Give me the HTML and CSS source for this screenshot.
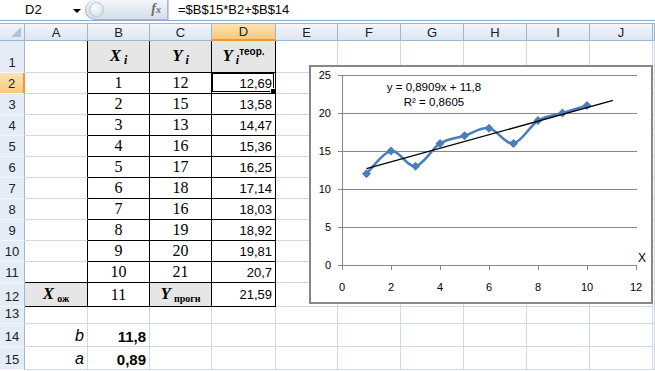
FILE: index.html
```html
<!DOCTYPE html>
<html lang="ru">
<head>
  <meta charset="UTF-8">
  <title>Регрессия</title>
  <link rel="stylesheet" href="styles.css">
</head>
<body>
  <!-- Formula bar -->
  <div class="formula-bar">
    <div class="name-box">D2<span class="drop"></span></div>
    <div class="fx-pill"><span class="knob"></span><span class="fx">f<sub>x</sub></span></div>
    <div class="formula">=$B$15*B2+$B$14</div>
  </div>

  <div class="sheet">
    <table class="grid">
      <colgroup>
        <col class="c-rh">
        <col class="c63"><col class="c62"><col class="c62"><col class="c64"><col class="c62">
        <col class="c63"><col class="c63"><col class="c63"><col class="c63"><col class="c63">
        <col class="c2">
      </colgroup>
      <tr class="head">
        <th class="corner"><span class="tri"></span></th>
        <th>A</th><th>B</th><th>C</th><th class="sel">D</th><th>E</th>
        <th>F</th><th>G</th><th>H</th><th>I</th><th>J</th><th></th>
      </tr>
      <tr class="h32">
        <th class="rh">1</th>
        <td class="rb"></td>
        <td class="box fill title"><span class="var">X</span><sub>i</sub></td>
        <td class="box fill title"><span class="var">Y</span><sub>i</sub></td>
        <td class="box fill title"><span class="var">Y</span><sub>i</sub><sup>теор.</sup></td>
        <td></td><td></td><td></td><td></td><td></td><td></td><td></td>
      </tr>
      <tr class="h21">
        <th class="rh sel">2</th>
        <td class="rb"></td>
        <td class="box num">1</td><td class="box num">12</td>
        <td class="box val active">12,69<span class="handle"></span></td>
        <td></td><td></td><td></td><td></td><td></td><td></td><td></td>
      </tr>
      <tr class="h21">
        <th class="rh">3</th><td class="rb"></td>
        <td class="box num">2</td><td class="box num">15</td><td class="box val">13,58</td>
        <td></td><td></td><td></td><td></td><td></td><td></td><td></td>
      </tr>
      <tr class="h21">
        <th class="rh">4</th><td class="rb"></td>
        <td class="box num">3</td><td class="box num">13</td><td class="box val">14,47</td>
        <td></td><td></td><td></td><td></td><td></td><td></td><td></td>
      </tr>
      <tr class="h21">
        <th class="rh">5</th><td class="rb"></td>
        <td class="box num">4</td><td class="box num">16</td><td class="box val">15,36</td>
        <td></td><td></td><td></td><td></td><td></td><td></td><td></td>
      </tr>
      <tr class="h21">
        <th class="rh">6</th><td class="rb"></td>
        <td class="box num">5</td><td class="box num">17</td><td class="box val">16,25</td>
        <td></td><td></td><td></td><td></td><td></td><td></td><td></td>
      </tr>
      <tr class="h21">
        <th class="rh">7</th><td class="rb"></td>
        <td class="box num">6</td><td class="box num">18</td><td class="box val">17,14</td>
        <td></td><td></td><td></td><td></td><td></td><td></td><td></td>
      </tr>
      <tr class="h21">
        <th class="rh">8</th><td class="rb"></td>
        <td class="box num">7</td><td class="box num">16</td><td class="box val">18,03</td>
        <td></td><td></td><td></td><td></td><td></td><td></td><td></td>
      </tr>
      <tr class="h21">
        <th class="rh">9</th><td class="rb"></td>
        <td class="box num">8</td><td class="box num">19</td><td class="box val">18,92</td>
        <td></td><td></td><td></td><td></td><td></td><td></td><td></td>
      </tr>
      <tr class="h21">
        <th class="rh">10</th><td class="rb"></td>
        <td class="box num">9</td><td class="box num">20</td><td class="box val">19,81</td>
        <td></td><td></td><td></td><td></td><td></td><td></td><td></td>
      </tr>
      <tr class="h21">
        <th class="rh">11</th><td class="rb bb"></td>
        <td class="box num">10</td><td class="box num">21</td><td class="box val">20,7</td>
        <td></td><td></td><td></td><td></td><td></td><td></td><td></td>
      </tr>
      <tr class="h24">
        <th class="rh">12</th>
        <td class="rb bb fill title"><span class="var">X</span><sub class="word">ож</sub></td>
        <td class="box num">11</td>
        <td class="box fill title"><span class="var">Y</span><sub class="word">прогн</sub></td>
        <td class="box val">21,59</td>
        <td></td><td></td><td></td><td></td><td></td><td></td><td></td>
      </tr>
      <tr class="h15">
        <th class="rh">13</th>
        <td></td><td></td><td></td><td></td><td></td><td></td><td></td><td></td><td></td><td></td><td></td>
      </tr>
      <tr class="h23">
        <th class="rh">14</th>
        <td class="letter">b</td><td class="coef">11,8</td>
        <td></td><td></td><td></td><td></td><td></td><td></td><td></td><td></td><td></td>
      </tr>
      <tr class="h23">
        <th class="rh">15</th>
        <td class="letter">a</td><td class="coef">0,89</td>
        <td></td><td></td><td></td><td></td><td></td><td></td><td></td><td></td><td></td>
      </tr>
    </table>

    <!-- Floating chart object -->
    <svg class="chart" width="345" height="240" viewBox="309 65 345 240">
      <rect x="310" y="66" width="342" height="237" fill="#fff" stroke="#878787" stroke-width="2"/>
      <g stroke="#868686" stroke-width="1">
        <line x1="338" y1="75.5" x2="637" y2="75.5"/>
        <line x1="338" y1="113.5" x2="637" y2="113.5"/>
        <line x1="338" y1="151.5" x2="637" y2="151.5"/>
        <line x1="338" y1="189.5" x2="637" y2="189.5"/>
        <line x1="338" y1="227.5" x2="637" y2="227.5"/>
        <line x1="338" y1="265.5" x2="637" y2="265.5"/>
        <line x1="342.5" y1="75" x2="342.5" y2="266"/>
        <line x1="342.5" y1="265" x2="342.5" y2="270"/>
        <line x1="391.5" y1="265" x2="391.5" y2="270"/>
        <line x1="440.5" y1="265" x2="440.5" y2="270"/>
        <line x1="489.5" y1="265" x2="489.5" y2="270"/>
        <line x1="538.5" y1="265" x2="538.5" y2="270"/>
        <line x1="587.5" y1="265" x2="587.5" y2="270"/>
        <line x1="636.5" y1="265" x2="636.5" y2="270"/>
      </g>
      <g class="tick" text-anchor="end">
        <text x="331" y="79">25</text>
        <text x="331" y="117">20</text>
        <text x="331" y="155">15</text>
        <text x="331" y="193">10</text>
        <text x="331" y="231">5</text>
        <text x="331" y="269">0</text>
      </g>
      <g class="tick" text-anchor="middle">
        <text x="342" y="291">0</text>
        <text x="391" y="291">2</text>
        <text x="440" y="291">4</text>
        <text x="489" y="291">6</text>
        <text x="538" y="291">8</text>
        <text x="587" y="291">10</text>
        <text x="636" y="291">12</text>
      </g>
      <text class="axis-name" x="642" y="262" text-anchor="middle">X</text>

      <path d="M366.5,173.8 C370.6,170 382.8,152.3 391,151 C399.2,149.7 407.3,167.5 415.5,166.2 C423.7,164.9 431.8,148.5 440,143.4 C448.2,138.3 456.3,138.3 464.5,135.8 C472.7,133.3 480.8,126.9 489,128.2 C497.2,129.5 505.3,144.7 513.5,143.4 C521.7,142.1 529.8,125.7 538,120.6 C546.2,115.5 554.3,115.5 562.5,113 C570.7,110.5 582.9,106.7 587,105.4"
            fill="none" stroke="#4A7EBB" stroke-width="2.5"/>
      <g fill="#4A7EBB">
        <path d="M366.5,169.3 L371,173.8 L366.5,178.3 L362,173.8 Z"/>
        <path d="M391,146.5 L395.5,151 L391,155.5 L386.5,151 Z"/>
        <path d="M415.5,161.7 L420,166.2 L415.5,170.7 L411,166.2 Z"/>
        <path d="M440,138.9 L444.5,143.4 L440,147.9 L435.5,143.4 Z"/>
        <path d="M464.5,131.3 L469,135.8 L464.5,140.3 L460,135.8 Z"/>
        <path d="M489,123.7 L493.5,128.2 L489,132.7 L484.5,128.2 Z"/>
        <path d="M513.5,138.9 L518,143.4 L513.5,147.9 L509,143.4 Z"/>
        <path d="M538,116.1 L542.5,120.6 L538,125.1 L533.5,120.6 Z"/>
        <path d="M562.5,108.5 L567,113 L562.5,117.5 L558,113 Z"/>
        <path d="M587,100.9 L591.5,105.4 L587,109.9 L582.5,105.4 Z"/>
      </g>
      <line x1="366.5" y1="168.6" x2="613" y2="100.4" stroke="#000" stroke-width="1.3"/>

      <text class="eq" x="434" y="91" text-anchor="middle">y = 0,8909x + 11,8</text>
      <text class="eq" x="434" y="106" text-anchor="middle">R² = 0,8605</text>
    </svg>
  </div>
</body>
</html>
```

FILE: styles.css
```css
/* Page */
body {
  margin: 0;
  width: 655px;
  height: 371px;
  overflow: hidden;
  background: #fff;
  font-family: "Liberation Sans", Arial, sans-serif;
  color: #000;
}

/* Formula bar */
.formula-bar {
  display: flex;
  align-items: center;
  height: 20px;
  border-bottom: 1px solid #8ea9cc;
  margin-bottom: 2px;
  font-size: 13px;
}

.name-box {
  position: relative;
  width: 85px;
  padding-left: 25px;
  box-sizing: border-box;
  line-height: 20px;
}

.drop {
  position: absolute;
  left: 73px;
  top: 9px;
  border-left: 4px solid transparent;
  border-right: 4px solid transparent;
  border-top: 4px solid #000;
}

.fx-pill {
  position: relative;
  width: 83px;
  height: 20px;
  box-sizing: border-box;
  border: 1px solid #a7b7cc;
  border-top: none;
  border-radius: 0 0 0 10px;
  border-top-left-radius: 10px;
  background: linear-gradient(#f3f6fa, #d4deea);
}

.knob {
  position: absolute;
  left: 3px;
  top: 2px;
  width: 13px;
  height: 13px;
  border-radius: 50%;
  background: radial-gradient(circle at 40% 35%, #fff, #cfd8e4);
  border: 1px solid #b9c6d6;
}

.fx {
  position: absolute;
  right: 6px;
  top: 1px;
  font-family: "Liberation Serif", serif;
  font-style: italic;
  font-weight: bold;
  font-size: 14px;
  color: #6d6d6d;
}

.fx sub {
  font-size: 10px;
  vertical-align: 0;
}

.formula {
  flex: 1;
  height: 20px;
  line-height: 20px;
  padding-left: 9px;
  border-left: 1px solid #c5cfdc;
}

/* Grid */
.sheet {
  position: relative;
}

.grid {
  border-collapse: separate;
  border-spacing: 0;
  table-layout: fixed;
  width: 655px;
  font-size: 13px;
}

.c-rh { width: 25px; }
.c2 { width: 2px; }
.c62 { width: 62px; }
.c63 { width: 63px; }
.c64 { width: 64px; }

.grid td,
.grid th {
  box-sizing: border-box;
  padding: 0 3px;
  border-right: 1px solid #d0d7e5;
  border-bottom: 1px solid #d0d7e5;
  line-height: 1;
  white-space: nowrap;
  overflow: hidden;
}

.h15 { height: 15px; }
.h21 { height: 21px; }
.h23 { height: 23px; }
.h24 { height: 24px; }
.h32 { height: 32px; }

/* Column and row headers */
.head { height: 18px; }

.head th {
  font-weight: normal;
  color: #222;
  background: linear-gradient(#f2f6fb, #dce6f2);
  border-top: 1px solid #9eb6ce;
  border-right: 1px solid #9eb6ce;
  border-bottom: 1px solid #9eb6ce;
}

.head th.sel {
  background: linear-gradient(#fbe4b4, #f6c97c);
  border-bottom: 2px solid #f29536;
}

.corner {
  position: relative;
}

.tri {
  position: absolute;
  right: 3px;
  bottom: 3px;
  border-left: 10px solid transparent;
  border-bottom: 10px solid #b3c3d8;
}

.grid th.rh {
  font-weight: normal;
  color: #222;
  background: #e4ecf7;
  border-right: 1px solid #9eb6ce;
  border-bottom: 1px solid #f4f7fb;
  vertical-align: bottom;
  padding: 0 0 3px;
  text-align: center;
}

.grid th.rh.sel {
  background: linear-gradient(#fbe4b4, #f6c97c);
  border-right: 2px solid #f29536;
}

/* Table with black borders */
.grid td.rb { border-right-color: #000; }
.grid td.bb { border-bottom-color: #000; }

.grid td.box {
  border-right: 1px solid #000;
  border-bottom: 1px solid #000;
}

.fill { background: #e6e6e6; }

.title {
  text-align: center;
  font-family: "Liberation Serif", serif;
  font-weight: bold;
  vertical-align: middle;
}

.var {
  font-style: italic;
  font-size: 17px;
}

.title sub {
  font-style: italic;
  font-size: 12px;
  vertical-align: -3px;
  margin-left: 3px;
}

.title sub.word {
  font-style: normal;
  font-size: 10px;
  margin-left: 3px;
}

.title sup {
  font-family: "Liberation Sans", Arial, sans-serif;
  font-size: 10px;
  vertical-align: 6px;
}

.num {
  text-align: center;
  font-family: "Liberation Serif", serif;
  font-size: 16px;
}

.val {
  text-align: right;
  font-size: 13px;
}

.active {
  position: relative;
}

.active::before {
  content: "";
  position: absolute;
  left: -2px;
  top: -2px;
  right: -1px;
  bottom: -1px;
  border: 3px double #000;
}

.handle {
  position: absolute;
  right: -2px;
  bottom: -2px;
  width: 5px;
  height: 5px;
  background: #000;
  border: 1px solid #fff;
}

.letter {
  text-align: right;
  font-style: italic;
  font-size: 16px;
  vertical-align: bottom;
  padding-bottom: 2px !important;
}

.coef {
  text-align: right;
  font-weight: bold;
  font-size: 15px;
  vertical-align: bottom;
  padding-bottom: 2px !important;
}

/* Chart */
.chart {
  position: absolute;
  left: 309px;
  top: 42px;
  font-family: "Liberation Sans", Arial, sans-serif;
}

.tick {
  font-size: 11px;
  fill: #000;
}

.axis-name {
  font-size: 12px;
}

.eq {
  font-size: 11.5px;
}
```
